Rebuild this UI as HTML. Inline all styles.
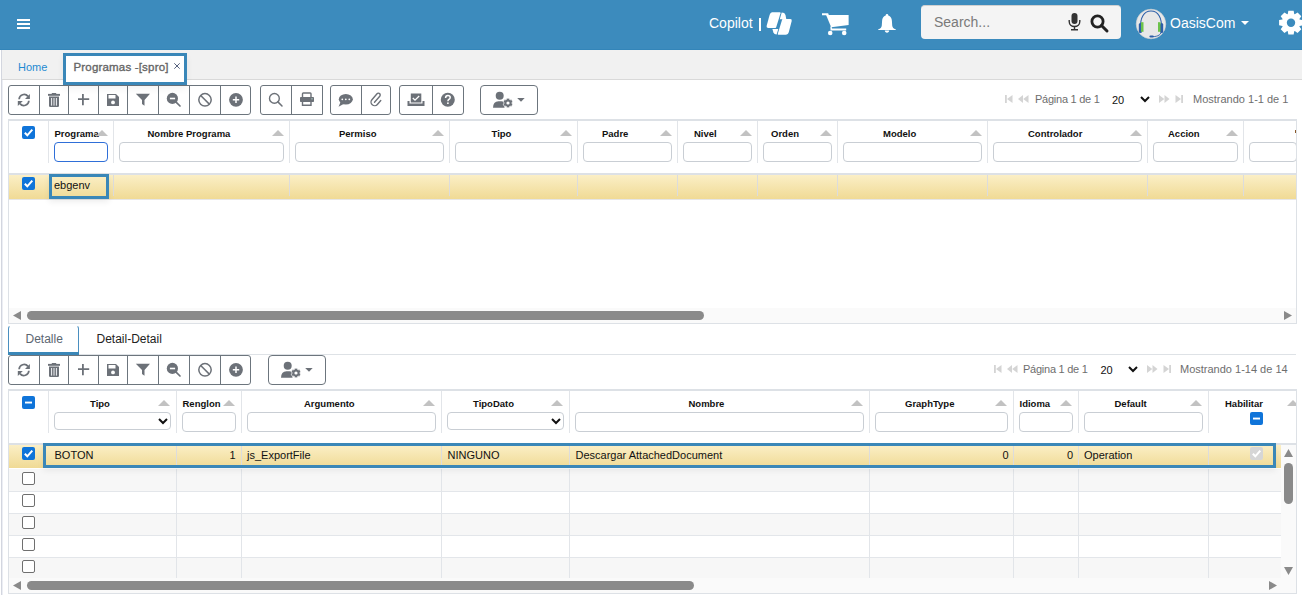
<!DOCTYPE html><html><head><meta charset="utf-8"><style>
*{box-sizing:border-box;margin:0;padding:0}
html,body{width:1302px;height:595px;overflow:hidden;background:#fff;font-family:"Liberation Sans",sans-serif;position:relative}
.t{position:absolute;white-space:nowrap;line-height:1}
.hd{position:absolute;white-space:nowrap;line-height:1;font-weight:bold;font-size:9.5px;color:#111}
.dt{position:absolute;white-space:nowrap;line-height:1;font-size:11px;color:#111}
svg{position:absolute;overflow:visible}
.inp{position:absolute;border:1px solid #c9ced4;border-radius:4px;background:#fff}
.vl{position:absolute;width:1px;background:#e1e4e8}
.cb{position:absolute;width:13px;height:13px;border-radius:2px}
.cbon{background:#0f74d9}
.cboff{border:1px solid #6f6f6f;background:#fff;border-radius:2px}
.tri{position:absolute;width:0;height:0;border-left:6px solid transparent;border-right:6px solid transparent;border-bottom:6px solid #c4c4c4}
</style></head><body>
<div style="position:absolute;left:0px;top:0px;width:1302px;height:50px;background:#3c8bbd"></div>
<div style="position:absolute;left:0px;top:49px;width:1302px;height:1px;background:#3385b9"></div>
<div style="position:absolute;left:17px;top:19px;width:13px;height:2px;background:#fff"></div>
<div style="position:absolute;left:17px;top:23px;width:13px;height:2px;background:#fff"></div>
<div style="position:absolute;left:17px;top:27px;width:13px;height:2px;background:#fff"></div>
<div class="t" style="left:709px;top:16px;font-size:14px;color:#fff">Copilot</div>
<div style="position:absolute;left:759px;top:18px;width:1.6px;height:13px;background:#fff"></div>
<svg style="left:762px;top:8px" width="34" height="30" viewBox="0 0 34 30"><g fill="#fff"><path d="M10 4.3 H17.8 Q18.8 4.3 18.5 5.3 L14.2 19.3 Q14 19.9 13.3 19.9 H6 Q4.2 19.9 4.6 18.1 L7.6 7 Q8.4 4.3 10 4.3 Z"/><path d="M19.7 4.6 Q22.8 4.6 23.5 7 L24.3 11.2 H17.8 Z"/><path d="M20.8 11.1 H28.3 Q30.2 11.1 29.7 13 L26.9 23.8 Q26.2 26.7 23.6 26.7 H16.5 Q15.5 26.7 15.8 25.7 L20 12 Q20.2 11.1 20.8 11.1 Z"/><path d="M10.4 21 H16.3 L14.6 26.6 Q12.2 26.6 11.4 24.6 Z"/></g></svg>
<svg style="left:822px;top:13px" width="27" height="23" viewBox="0 0 27 23"><g fill="#fff"><path d="M0 0.2 H6.2 L6.9 2.2 H0 Z"/><path d="M4.1 2 H26.6 V12 L9.2 14.3 Z"/><path d="M8.3 13.5 L9.6 13.5 L10 15.6 H24.2 V17.6 H8.6 Z"/><circle cx="8.2" cy="20" r="2.3"/><circle cx="22.2" cy="20" r="2.3"/></g></svg>
<svg style="left:878px;top:14px" width="18" height="19" viewBox="0 0 18 19"><g fill="#fff"><path d="M9 0 C9.8 0 10.3 0.6 10.3 1.4 C12.6 2.1 13.8 4.1 13.9 6.7 L14.2 11.5 C14.4 13.4 15.5 14.6 17.9 15.6 V16.1 H0.1 V15.6 C2.5 14.6 3.6 13.4 3.8 11.5 L4.1 6.7 C4.2 4.1 5.4 2.1 7.7 1.4 C7.7 0.6 8.2 0 9 0 Z"/><path d="M6.8 16.6 H11.2 C11.2 17.9 10.2 18.7 9 18.7 C7.8 18.7 6.8 17.9 6.8 16.6 Z"/></g></svg>
<div style="position:absolute;left:921px;top:5px;width:200px;height:34px;background:#f4f4f4;border-radius:4px;border-top:1px solid #d0d0d0"></div>
<div class="t" style="left:934px;top:15px;font-size:14px;color:#7a7a7a">Search...</div>
<svg style="left:1068px;top:13px" width="13" height="18" viewBox="0 0 13 18"><rect x="3.5" y="0" width="6" height="11" rx="3" fill="#333"/><path d="M1.2 7 V8.5 C1.2 11.5 3.5 13.5 6.5 13.5 C9.5 13.5 11.8 11.5 11.8 8.5 V7" stroke="#333" stroke-width="1.4" fill="none"/><path d="M6.5 13.5 V16.5 M3 16.8 H10" stroke="#333" stroke-width="1.4"/></svg>
<svg style="left:1090px;top:14px" width="19" height="18" viewBox="0 0 19 18"><circle cx="7.5" cy="7.5" r="5.6" stroke="#222" stroke-width="2.8" fill="none"/><path d="M11.5 11.5 L17 17" stroke="#222" stroke-width="3" stroke-linecap="round"/></svg>
<svg style="left:1135px;top:8px" width="32" height="32" viewBox="0 0 32 32"><circle cx="16" cy="16" r="14.8" fill="#e8e8e8" stroke="#d0d0d0" stroke-width="0.6"/><path d="M5.6 21 C4.8 9.5 9 3 16 3 C23 3 27.2 9.5 26.4 21" stroke="#2d5fa8" stroke-width="1.1" fill="none"/><rect x="3.8" y="15" width="3.2" height="10" rx="1.5" fill="#2d5fa8"/><rect x="6" y="14.2" width="2.5" height="9.6" fill="#6cc24a"/><rect x="25" y="15" width="3.2" height="10" rx="1.5" fill="#2d5fa8"/><rect x="23" y="14.2" width="2.5" height="9.6" fill="#6cc24a"/><path d="M26.8 22 C26.5 26.5 23 28.6 18 28.6" stroke="#2d5fa8" stroke-width="0.9" fill="none"/><rect x="14.4" y="27.4" width="4.4" height="2.2" rx="1.1" fill="#2d5fa8"/></svg>
<div class="t" style="left:1170px;top:16px;font-size:14px;color:#fff">OasisCom</div>
<svg style="left:1241px;top:21px" width="8" height="4" viewBox="0 0 8 4"><path d="M0 0 H8 L4 4 Z" fill="#fff"/></svg>
<svg style="left:0;top:0" width="1302" height="50"><path d="M1302.91 20.04 L1302.91 25.36 L1299.61 25.94 L1299.38 26.50 L1301.30 29.24 L1297.54 33.00 L1294.80 31.08 L1294.24 31.31 L1293.66 34.61 L1288.34 34.61 L1287.76 31.31 L1287.20 31.08 L1284.46 33.00 L1280.70 29.24 L1282.62 26.50 L1282.39 25.94 L1279.09 25.36 L1279.09 20.04 L1282.39 19.46 L1282.62 18.90 L1280.70 16.16 L1284.46 12.40 L1287.20 14.32 L1287.76 14.09 L1288.34 10.79 L1293.66 10.79 L1294.24 14.09 L1294.80 14.32 L1297.54 12.40 L1301.30 16.16 L1299.38 18.90 L1299.61 19.46Z" fill="#fff"/><circle cx="1291" cy="22.7" r="4.2" fill="#3c8bbd"/></svg>
<div style="position:absolute;left:1px;top:50px;width:1px;height:545px;background:#d3d6df"></div>
<div style="position:absolute;left:2px;top:80px;width:1px;height:515px;background:#eceef4"></div>
<div style="position:absolute;left:2px;top:50px;width:1300px;height:29px;background:#f1f1f1"></div>
<div style="position:absolute;left:2px;top:79px;width:1300px;height:1px;background:#d9d9d9"></div>
<div class="t" style="left:18px;top:62px;font-size:11px;color:#1f8ad1">Home</div>
<div style="position:absolute;left:63px;top:53px;width:124px;height:32px;background:#fff;border:3px solid #3a87b8;box-shadow:0 4px 7px rgba(0,0,0,0.05);z-index:3"></div>
<div class="t" style="left:73.5px;top:62px;font-size:11.5px;color:#666;-webkit-text-stroke:0.35px #666;letter-spacing:0.18px;z-index:4">Programas -[spro]</div>
<svg style="left:174px;top:63px;z-index:4" width="6" height="6" viewBox="0 0 6 6"><path d="M0.3 0.3 L5.7 5.7 M5.7 0.3 L0.3 5.7" stroke="#56627e" stroke-width="1"/></svg>
<div style="position:absolute;left:8px;top:85px;width:243px;height:30px;border:1px solid #6c757d;border-radius:3px;background:#fff"></div>
<div style="position:absolute;left:39px;top:85px;width:1px;height:30px;background:#6c757d"></div>
<div style="position:absolute;left:68px;top:85px;width:1px;height:30px;background:#6c757d"></div>
<div style="position:absolute;left:98px;top:85px;width:1px;height:30px;background:#6c757d"></div>
<div style="position:absolute;left:127px;top:85px;width:1px;height:30px;background:#6c757d"></div>
<div style="position:absolute;left:158px;top:85px;width:1px;height:30px;background:#6c757d"></div>
<div style="position:absolute;left:189px;top:85px;width:1px;height:30px;background:#6c757d"></div>
<div style="position:absolute;left:220px;top:85px;width:1px;height:30px;background:#6c757d"></div>
<svg style="left:16px;top:92px" width="16" height="16" viewBox="0 0 16 16"><path d="M3.1 7.2 A5 5 0 0 1 12 4.4" stroke="#6c7178" stroke-width="1.75" fill="none"/><path d="M13.9 2 V6.9 H9 Z" fill="#6c7178"/><path d="M12.9 8.8 A5 5 0 0 1 4 11.6" stroke="#6c7178" stroke-width="1.75" fill="none"/><path d="M1.8 13.9 V8.9 H6.8 Z" fill="#6c7178"/></svg>
<svg style="left:47px;top:93px" width="14" height="16" viewBox="0 0 14 16"><rect x="4.8" y="0" width="4.4" height="1.5" fill="#6c7178"/><rect x="1" y="0.9" width="12" height="1.9" fill="#6c7178"/><path d="M2 3.4 H12 V12.8 Q12 14 10.8 14 H3.2 Q2 14 2 12.8 Z" fill="#6c7178"/><rect x="4" y="5" width="1.1" height="7.6" fill="#e4e6ea"/><rect x="6.45" y="5" width="1.1" height="7.6" fill="#e4e6ea"/><rect x="8.9" y="5" width="1.1" height="7.6" fill="#e4e6ea"/></svg>
<svg style="left:77px;top:93px" width="13" height="13" viewBox="0 0 13 13"><path d="M1 6.2 H12.2 M5.9 1 V12.2" stroke="#6c7178" stroke-width="1.8"/></svg>
<svg style="left:106px;top:93px" width="14" height="14" viewBox="0 0 14 14"><path d="M1 1 H10 L13 4 V13 H1 Z" fill="#6c7178"/><rect x="2.5" y="2" width="7" height="3.5" fill="#fff"/><circle cx="7" cy="9.4" r="1.9" fill="#fff"/></svg>
<svg style="left:135px;top:93px" width="16" height="14" viewBox="0 0 16 14"><path d="M0.8 0.8 H15 L9.5 7 V12.8 L7 11 V7 Z" fill="#6c7178"/></svg>
<svg style="left:165px;top:92px" width="17" height="17" viewBox="0 0 17 17"><circle cx="7.4" cy="6.4" r="5.6" fill="#6c7178"/><rect x="4.9" y="5.7" width="5.2" height="1.6" fill="#fff"/><path d="M10.8 9.8 L15 14" stroke="#6c7178" stroke-width="1.7" stroke-linecap="round"/></svg>
<svg style="left:197px;top:92px" width="16" height="16" viewBox="0 0 16 16"><circle cx="8" cy="7.8" r="6.2" stroke="#6c7178" stroke-width="1.5" fill="none"/><path d="M3.7 3.5 L12.3 12.1" stroke="#6c7178" stroke-width="1.5"/></svg>
<svg style="left:228px;top:92px" width="16" height="16" viewBox="0 0 16 16"><circle cx="8" cy="7.8" r="6.9" fill="#6c7178"/><path d="M4.8 7.8 H11.2 M8 4.6 V11" stroke="#fff" stroke-width="1.5"/></svg>
<div style="position:absolute;left:260px;top:85px;width:63px;height:30px;border:1px solid #6c757d;border-radius:3px 0 0 3px;background:#fff"></div>
<div style="position:absolute;left:291px;top:85px;width:1px;height:30px;background:#6c757d"></div>
<svg style="left:266px;top:91px" width="18" height="18" viewBox="0 0 18 18"><circle cx="8.4" cy="7.4" r="4.9" stroke="#6c7178" stroke-width="1.4" fill="none"/><path d="M11.9 10.9 L16 15" stroke="#6c7178" stroke-width="1.5" stroke-linecap="round"/></svg>
<svg style="left:299px;top:92px" width="16" height="15" viewBox="0 0 16 15"><path d="M3.5 5 V1.8 Q3.5 1 4.3 1 H11.2 Q12 1 12 1.8 V5" stroke="#6c7178" stroke-width="1.4" fill="none"/><rect x="1" y="5" width="14" height="5" rx="0.8" fill="#6c7178"/><path d="M3.5 9 V13.2 H12 V9" stroke="#6c7178" stroke-width="1.4" fill="none"/><circle cx="13" cy="6.8" r="0.6" fill="#cfe"/></svg>
<div style="position:absolute;left:330px;top:85px;width:61px;height:30px;border:1px solid #6c757d;border-radius:3px;background:#fff"></div>
<div style="position:absolute;left:361px;top:85px;width:1px;height:30px;background:#6c757d"></div>
<svg style="left:337px;top:93px" width="17" height="15" viewBox="0 0 17 15"><ellipse cx="8.8" cy="6.2" rx="7" ry="5.3" fill="#6c7178"/><path d="M3.5 9 L1.6 13.8 L7 10.8 Z" fill="#6c7178"/><circle cx="5.3" cy="6.3" r="0.9" fill="#fff"/><circle cx="8.8" cy="6.3" r="0.9" fill="#fff"/><circle cx="12.3" cy="6.3" r="0.9" fill="#fff"/></svg>
<svg style="left:366px;top:90px" width="20" height="20" viewBox="0 0 20 20"><g transform="translate(10.6 9.8) rotate(41) translate(-3.6 -6.6)"><path d="M3.6 9.8 V1.8 A1.8 1.8 0 0 0 0 1.8 V9.6 A3.6 3.6 0 0 0 7.2 9.6 V4.4" stroke="#6c7178" stroke-width="1.4" fill="none" stroke-linecap="round"/></g></svg>
<div style="position:absolute;left:399px;top:85px;width:65px;height:30px;border:1px solid #6c757d;border-radius:3px;background:#fff"></div>
<div style="position:absolute;left:432px;top:85px;width:1px;height:30px;background:#6c757d"></div>
<svg style="left:407px;top:93px" width="18" height="14" viewBox="0 0 18 14"><rect x="3.8" y="0.5" width="10.5" height="9" fill="#6c7178"/><path d="M5.8 5 L8 7.2 L12.2 3" stroke="#fff" stroke-width="1.3" fill="none"/><path d="M1.5 8 V12 H16.5 V8" stroke="#6c7178" stroke-width="2" fill="none"/><rect x="1" y="10.5" width="16" height="2.3" fill="#6c7178"/></svg>
<svg style="left:440px;top:92px" width="16" height="16" viewBox="0 0 16 16"><circle cx="7.8" cy="7.8" r="7" fill="#6c7178"/><path d="M5.6 6 Q5.6 3.6 7.9 3.6 Q10.2 3.6 10.2 5.6 Q10.2 6.9 8.8 7.5 Q7.9 7.9 7.9 9.3" stroke="#fff" stroke-width="1.5" fill="none"/><rect x="7.1" y="10.4" width="1.6" height="1.6" fill="#fff"/></svg>
<div style="position:absolute;left:480px;top:85px;width:58px;height:30px;border:1px solid #6c757d;border-radius:4px;background:#fff"></div>
<svg style="left:492px;top:91px" width="34" height="18" viewBox="0 0 34 18"><circle cx="7.7" cy="4.7" r="4" fill="#6c7178"/><path d="M1 16.7 Q1 10.5 6.5 10.3 H9.5 Q11 10.3 12.5 11 L12.5 16.7 Z" fill="#6c7178"/><path d="M14.52 7.22 L17.48 7.22 L17.59 8.44 L18.29 8.84 L19.40 8.33 L20.88 10.89 L19.88 11.60 L19.88 12.40 L20.88 13.11 L19.40 15.67 L18.29 15.16 L17.59 15.56 L17.48 16.78 L14.52 16.78 L14.41 15.56 L13.71 15.16 L12.60 15.67 L11.12 13.11 L12.12 12.40 L12.12 11.60 L11.12 10.89 L12.60 8.33 L13.71 8.84 L14.41 8.44Z" fill="#6c7178" stroke="#fff" stroke-width="0.7"/><circle cx="16" cy="12" r="1.6" fill="#fff"/><path d="M25.2 6.9 H32.7 L29 10.7 Z" fill="#6c7178"/></svg>
<svg style="left:1005px;top:95px" width="8" height="8" viewBox="0 0 8 8"><rect x="0" y="0" width="1.8" height="8" fill="#d4d4d4"/><path d="M7.5 0 V8 L2 4 Z" fill="#d4d4d4"/></svg>
<svg style="left:1018px;top:95px" width="11" height="8" viewBox="0 0 11 8"><path d="M5 0 V8 L0 4 Z M10.5 0 V8 L5.2 4 Z" fill="#d4d4d4"/></svg>
<div class="t" style="left:1035px;top:94px;font-size:11px;color:#6e6e6e;letter-spacing:-0.25px">Página 1 de 1</div>
<div class="t" style="left:1112px;top:95px;font-size:11px;color:#111">20</div>
<svg style="left:1140px;top:96px" width="10" height="7" viewBox="0 0 10 7"><path d="M1 1 L5 5 L9 1" stroke="#111" stroke-width="2" fill="none"/></svg>
<svg style="left:1159px;top:95px" width="11" height="8" viewBox="0 0 11 8"><path d="M0 0 V8 L5.3 4 Z M5.5 0 V8 L10.5 4 Z" fill="#d4d4d4"/></svg>
<svg style="left:1175px;top:95px" width="8" height="8" viewBox="0 0 8 8"><path d="M0.5 0 V8 L6 4 Z" fill="#d4d4d4"/><rect x="6.2" y="0" width="1.8" height="8" fill="#d4d4d4"/></svg>
<div class="t" style="left:1193px;top:94px;font-size:11px;color:#6e6e6e">Mostrando 1-1 de 1</div>
<div style="position:absolute;left:8px;top:119px;width:1289px;height:205px;border:1px solid #dde1e6;border-top:2px solid #dde1e6;background:#fff"></div>
<div style="position:absolute;left:9px;top:173px;width:1287px;height:2px;background:#dde1e6"></div>
<svg style="left:22px;top:126px" width="13" height="13" viewBox="0 0 13 13"><rect x="0" y="0" width="13" height="13" rx="2" fill="#0f74d9"/><path d="M2.8 6.8 L5.3 9.3 L10.3 3.6" stroke="#fff" stroke-width="2" fill="none"/></svg>
<div style="position:absolute;left:48px;top:121px;width:1px;height:42px;background:#e2e5e9"></div>
<div style="position:absolute;left:113px;top:121px;width:1px;height:42px;background:#e2e5e9"></div>
<div style="position:absolute;left:289px;top:121px;width:1px;height:42px;background:#e2e5e9"></div>
<div style="position:absolute;left:449px;top:121px;width:1px;height:42px;background:#e2e5e9"></div>
<div style="position:absolute;left:577px;top:121px;width:1px;height:42px;background:#e2e5e9"></div>
<div style="position:absolute;left:677px;top:121px;width:1px;height:42px;background:#e2e5e9"></div>
<div style="position:absolute;left:757px;top:121px;width:1px;height:42px;background:#e2e5e9"></div>
<div style="position:absolute;left:837px;top:121px;width:1px;height:42px;background:#e2e5e9"></div>
<div style="position:absolute;left:987px;top:121px;width:1px;height:42px;background:#e2e5e9"></div>
<div style="position:absolute;left:1147px;top:121px;width:1px;height:42px;background:#e2e5e9"></div>
<div style="position:absolute;left:1243px;top:121px;width:1px;height:42px;background:#e2e5e9"></div>
<div class="hd" style="left:54.5px;top:129px">Programa</div>
<div class="hd" style="left:147.5px;top:129px">Nombre Programa</div>
<div class="hd" style="left:339px;top:129px">Permiso</div>
<div class="hd" style="left:491.5px;top:129px">Tipo</div>
<div class="hd" style="left:602px;top:129px">Padre</div>
<div class="hd" style="left:694px;top:129px">Nivel</div>
<div class="hd" style="left:771px;top:129px">Orden</div>
<div class="hd" style="left:883px;top:129px">Modelo</div>
<div class="hd" style="left:1028px;top:129px">Controlador</div>
<div class="hd" style="left:1168px;top:129px">Accion</div>
<div style="position:absolute;left:1295px;top:130px;width:1px;height:3px;background:#8a5a2a"></div>
<svg style="left:96px;top:130px" width="12" height="6" viewBox="0 0 12 6"><path d="M0 6 L6 0 L12 6 Z" fill="#c2c2c2"/></svg>
<svg style="left:272px;top:130px" width="12" height="6" viewBox="0 0 12 6"><path d="M0 6 L6 0 L12 6 Z" fill="#c2c2c2"/></svg>
<svg style="left:432px;top:130px" width="12" height="6" viewBox="0 0 12 6"><path d="M0 6 L6 0 L12 6 Z" fill="#c2c2c2"/></svg>
<svg style="left:560px;top:130px" width="12" height="6" viewBox="0 0 12 6"><path d="M0 6 L6 0 L12 6 Z" fill="#c2c2c2"/></svg>
<svg style="left:660px;top:130px" width="12" height="6" viewBox="0 0 12 6"><path d="M0 6 L6 0 L12 6 Z" fill="#c2c2c2"/></svg>
<svg style="left:740px;top:130px" width="12" height="6" viewBox="0 0 12 6"><path d="M0 6 L6 0 L12 6 Z" fill="#c2c2c2"/></svg>
<svg style="left:820px;top:130px" width="12" height="6" viewBox="0 0 12 6"><path d="M0 6 L6 0 L12 6 Z" fill="#c2c2c2"/></svg>
<svg style="left:970px;top:130px" width="12" height="6" viewBox="0 0 12 6"><path d="M0 6 L6 0 L12 6 Z" fill="#c2c2c2"/></svg>
<svg style="left:1130px;top:130px" width="12" height="6" viewBox="0 0 12 6"><path d="M0 6 L6 0 L12 6 Z" fill="#c2c2c2"/></svg>
<svg style="left:1226px;top:130px" width="12" height="6" viewBox="0 0 12 6"><path d="M0 6 L6 0 L12 6 Z" fill="#c2c2c2"/></svg>
<div class="inp" style="left:54px;top:142px;width:54px;height:20px;border:1.5px solid #2f6fd8;border-radius:4px"></div>
<div class="inp" style="left:119px;top:142px;width:165px;height:20px"></div>
<div class="inp" style="left:295px;top:142px;width:149px;height:20px"></div>
<div class="inp" style="left:455px;top:142px;width:117px;height:20px"></div>
<div class="inp" style="left:583px;top:142px;width:89px;height:20px"></div>
<div class="inp" style="left:683px;top:142px;width:69px;height:20px"></div>
<div class="inp" style="left:763px;top:142px;width:69px;height:20px"></div>
<div class="inp" style="left:843px;top:142px;width:139px;height:20px"></div>
<div class="inp" style="left:993px;top:142px;width:149px;height:20px"></div>
<div class="inp" style="left:1153px;top:142px;width:85px;height:20px"></div>
<div class="inp" style="left:1249px;top:142px;width:48px;height:20px"></div>
<div style="position:absolute;left:1296px;top:119px;width:6px;height:210px;background:#fff"></div>
<div style="position:absolute;left:1296px;top:119px;width:1px;height:205px;background:#dde1e6"></div>
<div style="position:absolute;left:9px;top:175px;width:1287px;height:24px;background:linear-gradient(#fbefc6,#f0da95)"></div>
<div style="position:absolute;left:9px;top:199px;width:1287px;height:1px;background:#e6e6e6"></div>
<div style="position:absolute;left:113px;top:175px;width:1px;height:21px;background:#dcdcdc"></div>
<div style="position:absolute;left:289px;top:175px;width:1px;height:21px;background:#dcdcdc"></div>
<div style="position:absolute;left:449px;top:175px;width:1px;height:21px;background:#dcdcdc"></div>
<div style="position:absolute;left:577px;top:175px;width:1px;height:21px;background:#dcdcdc"></div>
<div style="position:absolute;left:677px;top:175px;width:1px;height:21px;background:#dcdcdc"></div>
<div style="position:absolute;left:757px;top:175px;width:1px;height:21px;background:#dcdcdc"></div>
<div style="position:absolute;left:837px;top:175px;width:1px;height:21px;background:#dcdcdc"></div>
<div style="position:absolute;left:987px;top:175px;width:1px;height:21px;background:#dcdcdc"></div>
<div style="position:absolute;left:1147px;top:175px;width:1px;height:21px;background:#dcdcdc"></div>
<div style="position:absolute;left:1243px;top:175px;width:1px;height:21px;background:#dcdcdc"></div>
<svg style="left:22px;top:177px" width="13" height="13" viewBox="0 0 13 13"><rect x="0" y="0" width="13" height="13" rx="2" fill="#0f74d9"/><path d="M2.8 6.8 L5.3 9.3 L10.3 3.6" stroke="#fff" stroke-width="2" fill="none"/></svg>
<div style="position:absolute;left:49px;top:174px;width:60px;height:25px;border:3px solid #3a87b8;box-shadow:0 3px 6px rgba(0,0,0,0.07)"></div>
<div class="dt" style="left:54px;top:180px">ebgenv</div>
<div style="position:absolute;left:9px;top:308px;width:1287px;height:15px;background:#fafafa"></div>
<svg style="left:13px;top:311px" width="8" height="9" viewBox="0 0 8 9"><path d="M8 0 V9 L0 4.5 Z" fill="#8a8a8a"/></svg>
<div style="position:absolute;left:27px;top:311px;width:677px;height:9px;background:#8a8a8a;border-radius:4.5px"></div>
<svg style="left:1284px;top:311px" width="8" height="9" viewBox="0 0 8 9"><path d="M0 0 V9 L8 4.5 Z" fill="#8a8a8a"/></svg>
<div style="position:absolute;left:79px;top:354px;width:1217px;height:1px;background:#dee2e6"></div>
<div style="position:absolute;left:8px;top:325px;width:71px;height:30px;border:1px solid #4a8fc0;border-top-color:#fff;border-bottom:none;border-radius:4px 4px 0 0;background:#fff"></div>
<div style="position:absolute;left:8px;top:352px;width:71px;height:3px;background:#3a87b8"></div>
<div class="t" style="left:25.5px;top:333px;font-size:12px;color:#5b6670">Detalle</div>
<div class="t" style="left:96.5px;top:333px;font-size:12px;color:#222">Detail-Detail</div>
<div style="position:absolute;left:8px;top:355px;width:243px;height:30px;border:1px solid #6c757d;border-radius:3px;background:#fff"></div>
<div style="position:absolute;left:39px;top:355px;width:1px;height:30px;background:#6c757d"></div>
<div style="position:absolute;left:68px;top:355px;width:1px;height:30px;background:#6c757d"></div>
<div style="position:absolute;left:98px;top:355px;width:1px;height:30px;background:#6c757d"></div>
<div style="position:absolute;left:127px;top:355px;width:1px;height:30px;background:#6c757d"></div>
<div style="position:absolute;left:158px;top:355px;width:1px;height:30px;background:#6c757d"></div>
<div style="position:absolute;left:189px;top:355px;width:1px;height:30px;background:#6c757d"></div>
<div style="position:absolute;left:220px;top:355px;width:1px;height:30px;background:#6c757d"></div>
<svg style="left:16px;top:362px" width="16" height="16" viewBox="0 0 16 16"><path d="M3.1 7.2 A5 5 0 0 1 12 4.4" stroke="#6c7178" stroke-width="1.75" fill="none"/><path d="M13.9 2 V6.9 H9 Z" fill="#6c7178"/><path d="M12.9 8.8 A5 5 0 0 1 4 11.6" stroke="#6c7178" stroke-width="1.75" fill="none"/><path d="M1.8 13.9 V8.9 H6.8 Z" fill="#6c7178"/></svg>
<svg style="left:47px;top:363px" width="14" height="16" viewBox="0 0 14 16"><rect x="4.8" y="0" width="4.4" height="1.5" fill="#6c7178"/><rect x="1" y="0.9" width="12" height="1.9" fill="#6c7178"/><path d="M2 3.4 H12 V12.8 Q12 14 10.8 14 H3.2 Q2 14 2 12.8 Z" fill="#6c7178"/><rect x="4" y="5" width="1.1" height="7.6" fill="#e4e6ea"/><rect x="6.45" y="5" width="1.1" height="7.6" fill="#e4e6ea"/><rect x="8.9" y="5" width="1.1" height="7.6" fill="#e4e6ea"/></svg>
<svg style="left:77px;top:363px" width="13" height="13" viewBox="0 0 13 13"><path d="M1 6.2 H12.2 M5.9 1 V12.2" stroke="#6c7178" stroke-width="1.8"/></svg>
<svg style="left:106px;top:363px" width="14" height="14" viewBox="0 0 14 14"><path d="M1 1 H10 L13 4 V13 H1 Z" fill="#6c7178"/><rect x="2.5" y="2" width="7" height="3.5" fill="#fff"/><circle cx="7" cy="9.4" r="1.9" fill="#fff"/></svg>
<svg style="left:135px;top:363px" width="16" height="14" viewBox="0 0 16 14"><path d="M0.8 0.8 H15 L9.5 7 V12.8 L7 11 V7 Z" fill="#6c7178"/></svg>
<svg style="left:165px;top:362px" width="17" height="17" viewBox="0 0 17 17"><circle cx="7.4" cy="6.4" r="5.6" fill="#6c7178"/><rect x="4.9" y="5.7" width="5.2" height="1.6" fill="#fff"/><path d="M10.8 9.8 L15 14" stroke="#6c7178" stroke-width="1.7" stroke-linecap="round"/></svg>
<svg style="left:197px;top:362px" width="16" height="16" viewBox="0 0 16 16"><circle cx="8" cy="7.8" r="6.2" stroke="#6c7178" stroke-width="1.5" fill="none"/><path d="M3.7 3.5 L12.3 12.1" stroke="#6c7178" stroke-width="1.5"/></svg>
<svg style="left:228px;top:362px" width="16" height="16" viewBox="0 0 16 16"><circle cx="8" cy="7.8" r="6.9" fill="#6c7178"/><path d="M4.8 7.8 H11.2 M8 4.6 V11" stroke="#fff" stroke-width="1.5"/></svg>
<div style="position:absolute;left:268px;top:355px;width:58px;height:30px;border:1px solid #6c757d;border-radius:4px;background:#fff"></div>
<svg style="left:280px;top:361px" width="34" height="18" viewBox="0 0 34 18"><circle cx="7.7" cy="4.7" r="4" fill="#6c7178"/><path d="M1 16.7 Q1 10.5 6.5 10.3 H9.5 Q11 10.3 12.5 11 L12.5 16.7 Z" fill="#6c7178"/><path d="M14.52 7.22 L17.48 7.22 L17.59 8.44 L18.29 8.84 L19.40 8.33 L20.88 10.89 L19.88 11.60 L19.88 12.40 L20.88 13.11 L19.40 15.67 L18.29 15.16 L17.59 15.56 L17.48 16.78 L14.52 16.78 L14.41 15.56 L13.71 15.16 L12.60 15.67 L11.12 13.11 L12.12 12.40 L12.12 11.60 L11.12 10.89 L12.60 8.33 L13.71 8.84 L14.41 8.44Z" fill="#6c7178" stroke="#fff" stroke-width="0.7"/><circle cx="16" cy="12" r="1.6" fill="#fff"/><path d="M25.2 6.9 H32.7 L29 10.7 Z" fill="#6c7178"/></svg>
<svg style="left:993.5px;top:365px" width="8" height="8" viewBox="0 0 8 8"><rect x="0" y="0" width="1.8" height="8" fill="#d4d4d4"/><path d="M7.5 0 V8 L2 4 Z" fill="#d4d4d4"/></svg>
<svg style="left:1006.5px;top:365px" width="11" height="8" viewBox="0 0 11 8"><path d="M5 0 V8 L0 4 Z M10.5 0 V8 L5.2 4 Z" fill="#d4d4d4"/></svg>
<div class="t" style="left:1023px;top:364px;font-size:11px;color:#6e6e6e;letter-spacing:-0.25px">Página 1 de 1</div>
<div class="t" style="left:1100.5px;top:365px;font-size:11px;color:#111">20</div>
<svg style="left:1128px;top:366px" width="10" height="7" viewBox="0 0 10 7"><path d="M1 1 L5 5 L9 1" stroke="#111" stroke-width="2" fill="none"/></svg>
<svg style="left:1147px;top:365px" width="11" height="8" viewBox="0 0 11 8"><path d="M0 0 V8 L5.3 4 Z M5.5 0 V8 L10.5 4 Z" fill="#d4d4d4"/></svg>
<svg style="left:1163px;top:365px" width="8" height="8" viewBox="0 0 8 8"><path d="M0.5 0 V8 L6 4 Z" fill="#d4d4d4"/><rect x="6.2" y="0" width="1.8" height="8" fill="#d4d4d4"/></svg>
<div class="t" style="left:1180px;top:364px;font-size:11px;color:#6e6e6e">Mostrando 1-14 de 14</div>
<div style="position:absolute;left:8px;top:389px;width:1289px;height:205px;border:1px solid #dde1e6;border-top:2px solid #dde1e6;background:#fff"></div>
<div style="position:absolute;left:9px;top:443px;width:1287px;height:2px;background:#dde1e6"></div>
<svg style="left:22px;top:396px" width="13" height="13" viewBox="0 0 13 13"><rect x="0" y="0" width="13" height="13" rx="2" fill="#0f74d9"/><rect x="3" y="5.6" width="7" height="1.9" fill="#fff"/></svg>
<div style="position:absolute;left:48px;top:391px;width:1px;height:42px;background:#e2e5e9"></div>
<div style="position:absolute;left:176px;top:391px;width:1px;height:42px;background:#e2e5e9"></div>
<div style="position:absolute;left:241px;top:391px;width:1px;height:42px;background:#e2e5e9"></div>
<div style="position:absolute;left:441px;top:391px;width:1px;height:42px;background:#e2e5e9"></div>
<div style="position:absolute;left:569px;top:391px;width:1px;height:42px;background:#e2e5e9"></div>
<div style="position:absolute;left:869px;top:391px;width:1px;height:42px;background:#e2e5e9"></div>
<div style="position:absolute;left:1013px;top:391px;width:1px;height:42px;background:#e2e5e9"></div>
<div style="position:absolute;left:1078px;top:391px;width:1px;height:42px;background:#e2e5e9"></div>
<div style="position:absolute;left:1208px;top:391px;width:1px;height:42px;background:#e2e5e9"></div>
<div class="hd" style="left:90px;top:399px">Tipo</div>
<div class="hd" style="left:182.5px;top:399px">Renglon</div>
<div class="hd" style="left:304px;top:399px">Argumento</div>
<div class="hd" style="left:473px;top:399px">TipoDato</div>
<div class="hd" style="left:688.5px;top:399px">Nombre</div>
<div class="hd" style="left:905px;top:399px">GraphType</div>
<div class="hd" style="left:1019.5px;top:399px">Idioma</div>
<div class="hd" style="left:1114.5px;top:399px">Default</div>
<div class="hd" style="left:1225px;top:399px">Habilitar</div>
<svg style="left:158px;top:400px" width="12" height="6" viewBox="0 0 12 6"><path d="M0 6 L6 0 L12 6 Z" fill="#c2c2c2"/></svg>
<svg style="left:223px;top:400px" width="12" height="6" viewBox="0 0 12 6"><path d="M0 6 L6 0 L12 6 Z" fill="#c2c2c2"/></svg>
<svg style="left:423px;top:400px" width="12" height="6" viewBox="0 0 12 6"><path d="M0 6 L6 0 L12 6 Z" fill="#c2c2c2"/></svg>
<svg style="left:551px;top:400px" width="12" height="6" viewBox="0 0 12 6"><path d="M0 6 L6 0 L12 6 Z" fill="#c2c2c2"/></svg>
<svg style="left:851px;top:400px" width="12" height="6" viewBox="0 0 12 6"><path d="M0 6 L6 0 L12 6 Z" fill="#c2c2c2"/></svg>
<svg style="left:995px;top:400px" width="12" height="6" viewBox="0 0 12 6"><path d="M0 6 L6 0 L12 6 Z" fill="#c2c2c2"/></svg>
<svg style="left:1060px;top:400px" width="12" height="6" viewBox="0 0 12 6"><path d="M0 6 L6 0 L12 6 Z" fill="#c2c2c2"/></svg>
<svg style="left:1190px;top:400px" width="12" height="6" viewBox="0 0 12 6"><path d="M0 6 L6 0 L12 6 Z" fill="#c2c2c2"/></svg>
<svg style="left:1287px;top:400px" width="12" height="6" viewBox="0 0 12 6"><path d="M0 6 L6 0 L12 6 Z" fill="#c2c2c2"/></svg>
<div class="inp" style="left:54px;top:412px;width:117px;height:18px"></div><svg style="left:158px;top:418px" width="10" height="7" viewBox="0 0 10 7"><path d="M1 1 L5 5 L9 1" stroke="#111" stroke-width="2" fill="none"/></svg>
<div class="inp" style="left:182px;top:412px;width:54px;height:20px"></div>
<div class="inp" style="left:247px;top:412px;width:189px;height:20px"></div>
<div class="inp" style="left:447px;top:412px;width:117px;height:18px"></div><svg style="left:551px;top:418px" width="10" height="7" viewBox="0 0 10 7"><path d="M1 1 L5 5 L9 1" stroke="#111" stroke-width="2" fill="none"/></svg>
<div class="inp" style="left:575px;top:412px;width:289px;height:20px"></div>
<div class="inp" style="left:875px;top:412px;width:133px;height:20px"></div>
<div class="inp" style="left:1019px;top:412px;width:54px;height:20px"></div>
<div class="inp" style="left:1084px;top:412px;width:119px;height:20px"></div>
<svg style="left:1250px;top:412px" width="13" height="13" viewBox="0 0 13 13"><rect x="0" y="0" width="13" height="13" rx="2" fill="#0f74d9"/><rect x="3" y="5.6" width="7" height="1.9" fill="#fff"/></svg>
<div style="position:absolute;left:1296px;top:389px;width:6px;height:206px;background:#fff"></div>
<div style="position:absolute;left:1296px;top:389px;width:1px;height:205px;background:#dde1e6"></div>
<div style="position:absolute;left:9px;top:445px;width:1272px;height:23px;background:linear-gradient(#fbefc6,#f0da95)"></div>
<div style="position:absolute;left:9px;top:469px;width:1272px;height:22px;background:#f7f7f7"></div>
<div style="position:absolute;left:22px;top:472px;width:13px;height:13px;border:1px solid #6f6f6f;border-radius:2px;background:#fff"></div>
<div style="position:absolute;left:9px;top:491px;width:1272px;height:22px;background:#fff"></div>
<div style="position:absolute;left:9px;top:491px;width:1272px;height:1px;background:#e3e6ea"></div>
<div style="position:absolute;left:22px;top:494px;width:13px;height:13px;border:1px solid #6f6f6f;border-radius:2px;background:#fff"></div>
<div style="position:absolute;left:9px;top:513px;width:1272px;height:22px;background:#f7f7f7"></div>
<div style="position:absolute;left:9px;top:513px;width:1272px;height:1px;background:#e3e6ea"></div>
<div style="position:absolute;left:22px;top:516px;width:13px;height:13px;border:1px solid #6f6f6f;border-radius:2px;background:#fff"></div>
<div style="position:absolute;left:9px;top:535px;width:1272px;height:22px;background:#fff"></div>
<div style="position:absolute;left:9px;top:535px;width:1272px;height:1px;background:#e3e6ea"></div>
<div style="position:absolute;left:22px;top:538px;width:13px;height:13px;border:1px solid #6f6f6f;border-radius:2px;background:#fff"></div>
<div style="position:absolute;left:9px;top:557px;width:1272px;height:22px;background:#f7f7f7"></div>
<div style="position:absolute;left:9px;top:557px;width:1272px;height:1px;background:#e3e6ea"></div>
<div style="position:absolute;left:22px;top:560px;width:13px;height:13px;border:1px solid #6f6f6f;border-radius:2px;background:#fff"></div>
<div style="position:absolute;left:9px;top:578px;width:1287px;height:15px;background:#fafafa"></div>
<div style="position:absolute;left:176px;top:469px;width:1px;height:109px;background:#e2e5e9"></div>
<div style="position:absolute;left:176px;top:445px;width:1px;height:20px;background:#dcdcdc"></div>
<div style="position:absolute;left:241px;top:469px;width:1px;height:109px;background:#e2e5e9"></div>
<div style="position:absolute;left:241px;top:445px;width:1px;height:20px;background:#dcdcdc"></div>
<div style="position:absolute;left:441px;top:469px;width:1px;height:109px;background:#e2e5e9"></div>
<div style="position:absolute;left:441px;top:445px;width:1px;height:20px;background:#dcdcdc"></div>
<div style="position:absolute;left:569px;top:469px;width:1px;height:109px;background:#e2e5e9"></div>
<div style="position:absolute;left:569px;top:445px;width:1px;height:20px;background:#dcdcdc"></div>
<div style="position:absolute;left:869px;top:469px;width:1px;height:109px;background:#e2e5e9"></div>
<div style="position:absolute;left:869px;top:445px;width:1px;height:20px;background:#dcdcdc"></div>
<div style="position:absolute;left:1013px;top:469px;width:1px;height:109px;background:#e2e5e9"></div>
<div style="position:absolute;left:1013px;top:445px;width:1px;height:20px;background:#dcdcdc"></div>
<div style="position:absolute;left:1078px;top:469px;width:1px;height:109px;background:#e2e5e9"></div>
<div style="position:absolute;left:1078px;top:445px;width:1px;height:20px;background:#dcdcdc"></div>
<div style="position:absolute;left:1208px;top:469px;width:1px;height:109px;background:#e2e5e9"></div>
<div style="position:absolute;left:1208px;top:445px;width:1px;height:20px;background:#dcdcdc"></div>
<svg style="left:22px;top:447px" width="13" height="13" viewBox="0 0 13 13"><rect x="0" y="0" width="13" height="13" rx="2" fill="#0f74d9"/><path d="M2.8 6.8 L5.3 9.3 L10.3 3.6" stroke="#fff" stroke-width="2" fill="none"/></svg>
<div style="position:absolute;left:43px;top:443px;width:1233px;height:25px;border:3px solid #3a87b8;box-shadow:0 3px 6px rgba(0,0,0,0.06)"></div>
<div class="dt" style="left:54.5px;top:450px">BOTON</div>
<div class="dt" style="left:170px;top:450px;width:65.5px;text-align:right">1</div>
<div class="dt" style="left:247px;top:450px">js_ExportFile</div>
<div class="dt" style="left:447.5px;top:450px">NINGUNO</div>
<div class="dt" style="left:575.5px;top:450px">Descargar AttachedDocument</div>
<div class="dt" style="left:900px;top:450px;width:108.5px;text-align:right">0</div>
<div class="dt" style="left:1020px;top:450px;width:53px;text-align:right">0</div>
<div class="dt" style="left:1084px;top:450px">Operation</div>
<svg style="left:1250px;top:447px" width="13" height="13" viewBox="0 0 13 13"><rect x="0" y="0" width="13" height="13" rx="2" fill="#d6d6d6"/><path d="M2.8 6.8 L5.3 9.3 L10.3 3.6" stroke="#fff" stroke-width="2" fill="none"/></svg>
<div style="position:absolute;left:1281px;top:445px;width:15px;height:133px;background:#fafafa"></div>
<svg style="left:1284px;top:449px" width="9" height="8" viewBox="0 0 9 8"><path d="M0 8 H9 L4.5 0 Z" fill="#8a8a8a"/></svg>
<div style="position:absolute;left:1284px;top:463px;width:9px;height:41px;background:#8a8a8a;border-radius:4.5px"></div>
<svg style="left:1284px;top:567px" width="9" height="8" viewBox="0 0 9 8"><path d="M0 0 H9 L4.5 8 Z" fill="#8a8a8a"/></svg>
<svg style="left:13px;top:581px" width="8" height="9" viewBox="0 0 8 9"><path d="M8 0 V9 L0 4.5 Z" fill="#8a8a8a"/></svg>
<div style="position:absolute;left:27px;top:581px;width:667px;height:9px;background:#8a8a8a;border-radius:4.5px"></div>
<svg style="left:1269px;top:581px" width="8" height="9" viewBox="0 0 8 9"><path d="M0 0 V9 L8 4.5 Z" fill="#8a8a8a"/></svg>
</body></html>
